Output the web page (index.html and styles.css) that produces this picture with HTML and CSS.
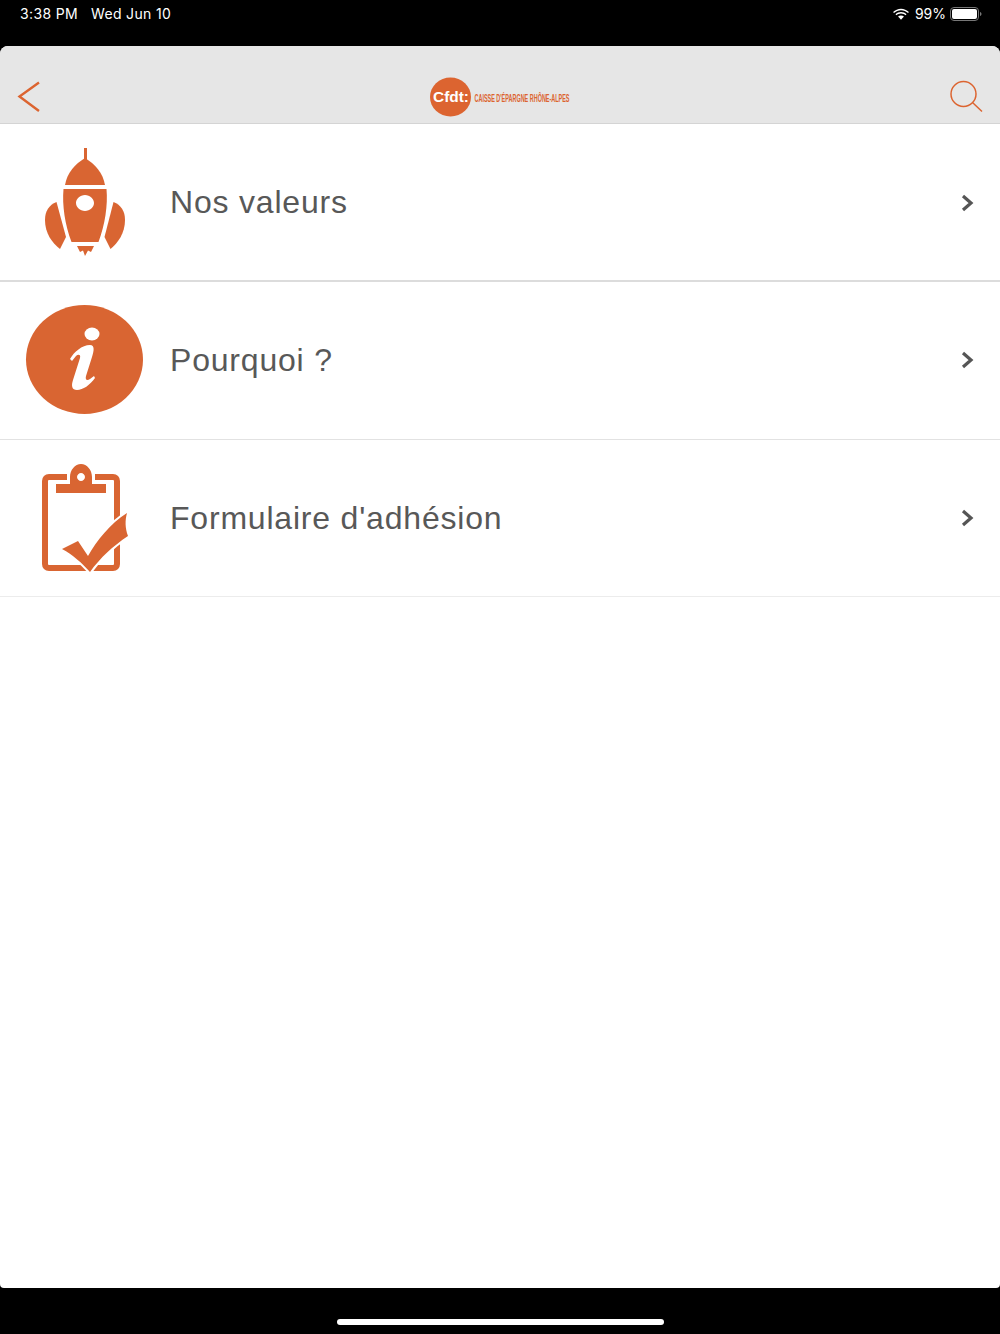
FILE: index.html
```html
<!DOCTYPE html>
<html lang="fr">
<head>
<meta charset="utf-8">
<title>CFDT</title>
<link rel="stylesheet" href="styles.css">
</head>
<body>
<div class="status">
  <div class="status-left"><span>3:38 PM</span><span>Wed Jun 10</span></div>
  <div class="status-right">
    <svg class="wifi" width="16" height="13" viewBox="0 0 18 14"><path d="M9 2.2c3 0 5.8 1.2 7.9 3.2l1-1.2C15.500 1.900 12.400.5 9 .5S2.500 1.900.1 4.200l1 1.200C3.200 3.400 6 2.200 9 2.200z" fill="#fff"/><path d="M9 5.900c2 0 3.800.8 5.200 2l1-1.200C13.500 5.100 11.400 4.200 9 4.200S4.500 5.100 2.800 6.700l1 1.200c1.400-1.200 3.200-2 5.200-2z" fill="#fff"/><path d="M9 8c-1.300 0-2.400.5-3.300 1.200L9 12.800l3.300-3.600C11.400 8.500 10.300 8 9 8z" fill="#fff"/></svg>
    <span class="pct">99%</span>
    <svg class="battery" width="32" height="14" viewBox="0 0 32 14"><rect x=".5" y=".5" width="28" height="13" rx="3.500" fill="none" stroke="#777"/><rect x="2" y="2" width="25" height="10" rx="2" fill="#fff"/><path d="M30 5v4c.9-.3 1.500-1.100 1.500-2s-.6-1.700-1.500-2z" fill="#777"/></svg>
  </div>
</div>
<main class="app">
  <header class="nav">
    <svg class="nav-icon" width="60" height="78" viewBox="0 46 60 78"><path class="line-thick" d="M39 83.500 19.500 97.500 39 112"/></svg>
    <svg class="logo" width="142" height="42" viewBox="430 76 142 42">
      <ellipse cx="450.500" cy="97" rx="20.500" ry="19.500" fill="#dc6430"/>
      <text class="logo-mark" x="433" y="101.500" textLength="36" lengthAdjust="spacingAndGlyphs">Cfdt:</text>
      <text class="logo-name" transform="translate(474.500 101.500) scale(1 2)" textLength="95" lengthAdjust="spacingAndGlyphs">CAISSE D'ÉPARGNE RHÔNE-ALPES</text>
    </svg>
    <svg class="nav-icon" width="60" height="78" viewBox="940 46 60 78"><circle class="line-thin" cx="963.500" cy="95" r="12.500"/><path class="line-thin" d="M972.500 103.500 982 112.500"/></svg>
  </header>
  <ul class="menu">
    <li class="row row-first">
      <svg class="row-icon" width="170" height="156" viewBox="0 124 170 156">
        <g class="fill">
          <rect x="84" y="148" width="3" height="13"/>
          <path d="M65 185C67 173 75 164 85 158C95 164 103 173 105 185Z"/>
          <path fill-rule="evenodd" d="M63.500 189H106.500C108 205 105 225 98.500 242H71.500C65 225 62 205 63.500 189ZM85 195C80 195 76 199 76 203C76 207 80 211 85 211C90 211 94 207 94 203C94 199 90 195 85 195Z"/>
          <path d="M56.500 202C49 205 45 211 45 220C45 233 52 243 60 249L66 237Z"/>
          <path d="M113.500 202C121 205 125 211 125 220C125 233 118 243 110.500 249L104.500 237Z"/>
          <path d="M77 246H94L91 252 88 250.500 85 256 83 250.500 80 252Z"/>
        </g>
      </svg>
      <span class="label">Nos valeurs</span>
      <svg class="chevron" width="14" height="18" viewBox="0 0 14 18"><path d="M2 2 10 9 2 16"/></svg>
    </li>
    <li class="row row-middle">
      <svg class="row-icon" width="170" height="156" viewBox="0 282 170 156">
        <ellipse class="fill" cx="84.500" cy="359.500" rx="58.500" ry="54.500"/>
        <ellipse class="knock" cx="92" cy="334" rx="7.500" ry="6.500"/>
        <path class="knock" d="M70 359C74 352 82 345 90 345C95 345 94 351 92 357L86 376C85 380 87 381 90 379L94 376 95 378C90 385 83 390 77 390C72 390 71 386 73 380L80 358C81 354 78 354 76 356L72 361Z"/>
      </svg>
      <span class="label">Pourquoi ?</span>
      <svg class="chevron" width="14" height="18" viewBox="0 0 14 18"><path d="M2 2 10 9 2 16"/></svg>
    </li>
    <li class="row row-last">
      <svg class="row-icon" width="170" height="156" viewBox="0 440 170 156">
        <path class="clip-frame" d="M67 477H49C46.500 477 45 478.500 45 481V564C45 566.500 46.500 568 49 568H113C115.500 568 117 566.500 117 564V481C117 478.500 115.500 477 113 477H95"/>
        <path class="fill" fill-rule="evenodd" d="M56 484H70V477C70 470 75 464 81 464C87 464 92 470 92 477V484H106V493H56ZM81 473C79 473 77 475 77 477C77 479 79 481 81 481C83 481 85 479 85 477C85 475 83 473 81 473Z"/>
        <path class="check" d="M62 549 78 541 88 556C97 540 110 524 127 513 125 520 125 528 128 536 113 546 100 558 90 572 82 563 73 555 62 549Z"/>
      </svg>
      <span class="label">Formulaire d'adhésion</span>
      <svg class="chevron" width="14" height="18" viewBox="0 0 14 18"><path d="M2 2 10 9 2 16"/></svg>
    </li>
  </ul>
</main>
<div class="home"><div class="home-bar"></div></div>
</body>
</html>
```

FILE: styles.css
```css
* { box-sizing: border-box; }
html, body { margin: 0; height: 100%; }
body {
  background: #000;
  font-family: "Liberation Sans", Arial, sans-serif;
  display: flex;
  flex-direction: column;
  height: 1334px;
  overflow: hidden;
}
svg { display: block; flex: none; }

.status {
  height: 46px;
  flex: none;
  display: flex;
  justify-content: space-between;
  align-items: flex-start;
  padding: 6px 18px 0 20px;
  color: #fff;
  font-family: Inter, "Liberation Sans", sans-serif;
  font-size: 14px;
  line-height: 16px;
  letter-spacing: .35px;
}
.status-left { display: flex; gap: 13px; }
.status-right { display: flex; align-items: center; gap: 6px; }
.pct { letter-spacing: 0; }
.battery { margin-left: -2px; }

.app {
  flex: 1;
  background: #fff;
  border-radius: 8px 8px 4px 4px;
  overflow: hidden;
  display: flex;
  flex-direction: column;
}
.nav {
  height: 78px;
  flex: none;
  background: #e6e6e6;
  display: flex;
  justify-content: space-between;
  align-items: flex-end;
  border-bottom: 1px solid #d4d4d4;
}
.logo { margin-bottom: 5px; margin-left: 2px; }
.line-thick { fill: none; stroke: #dc6430; stroke-width: 2.400; }
.line-thin { fill: none; stroke: #dc6430; stroke-width: 1.500; }
.logo-mark { fill: #fff; font: bold 14px "Liberation Sans", sans-serif; }
.logo-name { fill: #dc6430; font: bold 5px "Liberation Sans", sans-serif; }

.menu { list-style: none; margin: 0; padding: 0; }
.row {
  height: 158px;
  display: flex;
  align-items: center;
  padding-right: 25px;
  border-bottom: 1px solid #e2e2e2;
}
.row-first { border-bottom: 2px solid #dcdcdc; }
.row-first .chevron { margin-top: 2px; }
.row-middle .chevron { margin-bottom: 1px; }
.row-last { height: 157px; border-bottom-color: #ececec; }
.row-icon { align-self: flex-start; }
.label { flex: 1; font-size: 32px; letter-spacing: .8px; color: #585858; }
.chevron { fill: none; stroke: #555; stroke-width: 3.200; }

.fill { fill: #d96532; }
.knock { fill: #fff; }
.clip-frame { fill: none; stroke: #d96532; stroke-width: 6; }
.check { fill: #d96532; stroke: #fff; stroke-width: 4; paint-order: stroke; }

.home { height: 46px; flex: none; display: flex; justify-content: center; padding-top: 31px; }
.home-bar { width: 327px; height: 6px; border-radius: 3px; background: #fff; }
```
